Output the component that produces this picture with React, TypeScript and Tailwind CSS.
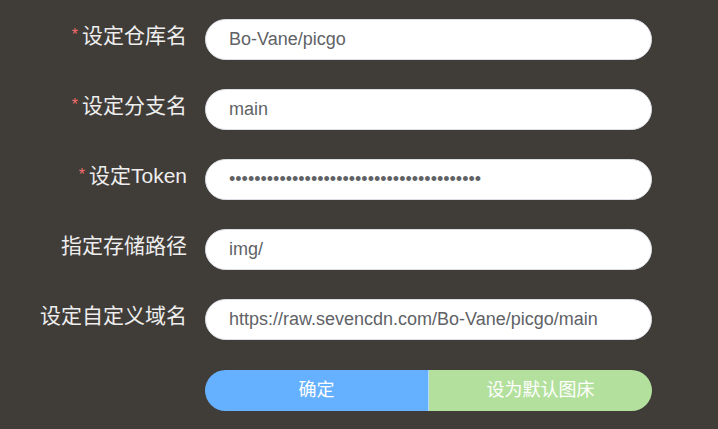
const fields = [
  { label: '设定仓库名', required: true, value: 'Bo-Vane/picgo', type: 'text' },
  { label: '设定分支名', required: true, value: 'main', type: 'text' },
  { label: '设定Token', required: true, value: 'ghp_xxxxxxxxxxxxxxxxxxxxxxxxxxxxxxxxxxxx', type: 'password' },
  { label: '指定存储路径', required: false, value: 'img/', type: 'text' },
  { label: '设定自定义域名', required: false, value: 'https://raw.sevencdn.com/Bo-Vane/picgo/main', type: 'text' },
];

export default function App() {
  return (
    <div
      className="w-[718px] h-[429px] bg-[#403c38] pt-[19px] overflow-hidden"
      style={{ fontFamily: '"Liberation Sans", "Noto Sans CJK SC", sans-serif' }}
    >
      <div className="flex flex-col gap-[29px]">
        {fields.map((f) => (
          <div key={f.label} className="flex items-center">
            <label className="w-[187px] text-right text-[21px] leading-none text-[#eeeeee] pb-[9px]">
              {f.required && <span className="text-[#f56c6c] text-[16px] mr-[4px] relative top-[2px] align-top">*</span>}
              {f.label}
            </label>
            <input
              readOnly
              type={f.type}
              defaultValue={f.value}
              className="ml-[18px] w-[447px] h-[41px] rounded-full bg-white border border-[#dcdfe6] px-[23px] text-[18px] text-[#606266] outline-none"
            />
          </div>
        ))}
        <div className="flex mt-[1px] ml-[205px] w-[447px] h-[41px] rounded-full overflow-hidden text-white text-[18px]">
          <button className="flex-1 bg-[#66b1ff] border-r border-[#b3d8ff]">确定</button>
          <button className="flex-1 bg-[#b3e19d]">设为默认图床</button>
        </div>
      </div>
    </div>
  );
}
